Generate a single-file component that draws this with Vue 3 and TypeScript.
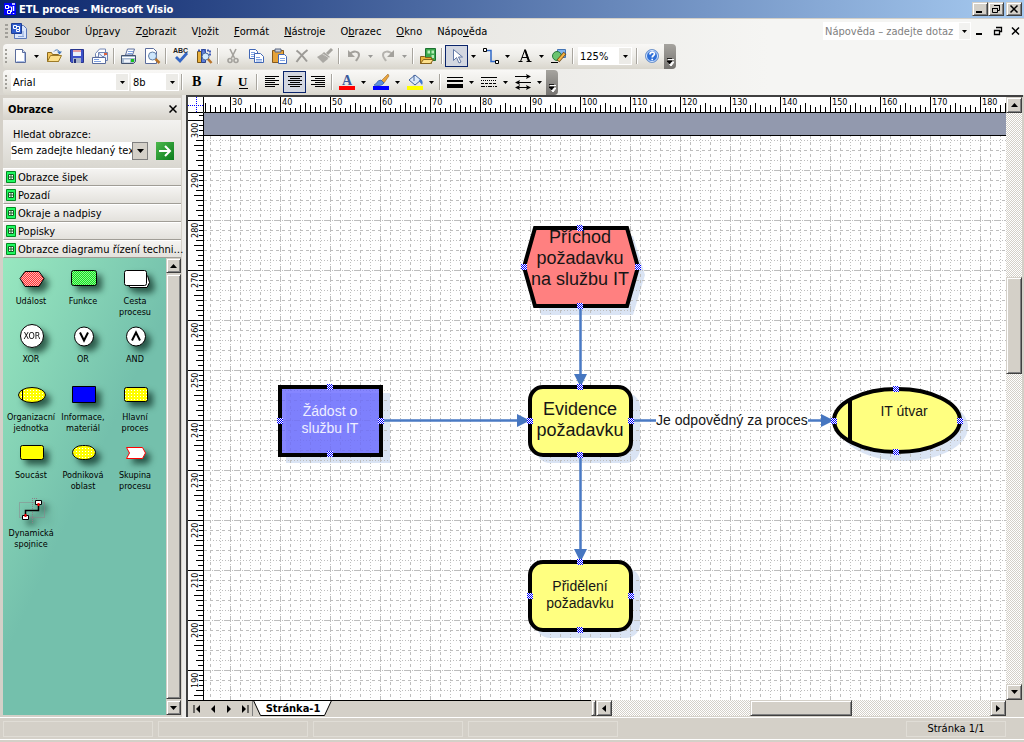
<script setup lang="ts">
import { computed, onBeforeUnmount, onMounted, ref } from 'vue'

interface Item {
  kind: 'icon' | 'arrow' | 'sep' | 'combo'
  name?: string
  label?: string
  active?: boolean
  off?: boolean
  value?: string
  size?: string
}

const icon = (name: string, label: string, extra: Partial<Item> = {}): Item => ({ kind: 'icon', name, label, ...extra })
const arrow = (label: string, off = false): Item => ({ kind: 'arrow', label, off })
const sep: Item = { kind: 'sep' }

const menus = [
  ['', 'S', 'oubor'], ['Úp', 'r', 'avy'], ['Z', 'o', 'brazit'], ['V', 'l', 'ožit'], ['', 'F', 'ormát'],
  ['', 'N', 'ástroje'], ['O', 'b', 'razec'], ['', 'O', 'kno'], ['Nápo', 'v', 'ěda'],
]

const standardBar: Item[] = [
  icon('new', 'Nový'), arrow('Nový – možnosti'), icon('open', 'Otevřít'), icon('save', 'Uložit'), icon('mail', 'E-mail'), sep,
  icon('print', 'Tisk'), icon('preview', 'Náhled'), sep,
  icon('spell', 'Pravopis'), icon('research', 'Zdroje informací'), sep,
  icon('cut', 'Vyjmout'), icon('copy', 'Kopírovat'), icon('paste', 'Vložit'), icon('remove', 'Odstranit'), icon('brush', 'Kopírovat formát'), sep,
  icon('undo', 'Zpět'), arrow('Zpět – možnosti', true), icon('redo', 'Znovu'), arrow('Znovu – možnosti', true), sep,
  icon('stencils', 'Obrazce'), sep,
  icon('pointer', 'Ukazatel', { active: true }), arrow('Ukazatel – možnosti'), icon('connector', 'Spojnice'), arrow('Spojnice – možnosti'),
  icon('text', 'Text'), arrow('Text – možnosti'), icon('drawing', 'Kreslení'), sep,
  { kind: 'combo', label: 'Lupa', value: '125%', size: 'zoom' }, sep,
  icon('help', 'Nápověda'),
]

const formatBar: Item[] = [
  { kind: 'combo', label: 'Písmo', value: 'Arial', size: 'font' },
  { kind: 'combo', label: 'Velikost písma', value: '8b', size: 'points' }, sep,
  icon('bold', 'Tučné'), icon('italic', 'Kurzíva'), icon('underline', 'Podtržené'), sep,
  icon('left', 'Vlevo'), icon('center', 'Na střed', { active: true }), icon('right', 'Vpravo'), sep,
  icon('fontcolor', 'Barva textu'), arrow('Barva textu – možnosti'), icon('linecolor', 'Barva čáry'), arrow('Barva čáry – možnosti'),
  icon('fill', 'Barva výplně'), arrow('Barva výplně – možnosti'), sep,
  icon('weight', 'Tloušťka čáry'), arrow('Tloušťka čáry – možnosti'), icon('dash', 'Vzorek čáry'), arrow('Vzorek čáry – možnosti'),
  icon('ends', 'Zakončení čáry'), arrow('Zakončení čáry – možnosti'),
]

const bars = [
  { id: 'standard', label: 'Standardní', items: standardBar },
  { id: 'format', label: 'Formát', items: formatBar },
]

const icons: Record<string, string> = {
  new: '<path d="M3.500 1.500h7l3 3v10h-10z" fill="#fff" stroke="#5a6c9c"/><path d="M12.500 5v8.500h-8" fill="none" stroke="#a9bce6"/><path d="M10.500 1.500v3h3" fill="#d6e1f8" stroke="#5a6c9c"/>',
  open: '<path d="M1.500 13.500v-9h4l1 2h6v7z" fill="#f3c55a" stroke="#8c6a1c"/><path d="M1.500 13.500l3-6h11l-3 6z" fill="#fde08a" stroke="#9c7a28"/><path d="M8 3.500c2-2.500 5-2 5.500 1" fill="none" stroke="#3f74b8"/><path d="M11 3.500h5l-2.500 3z" fill="#3f74b8"/>',
  save: '<path d="M1.500 1.500h13v13h-12l-1-1z" fill="#3c50c8" stroke="#28358c"/><path d="M4 2h8v6h-8z" fill="#e9effc"/><path d="M4 3h8" stroke="#e04848"/><path d="M4 10h8v5h-8z" fill="#aab4c8"/><path d="M5 11h2v4h-2z" fill="#252f78"/>',
  mail: '<path d="M3.500 5.500l4-4.500h6v8h-10z" fill="#fff" stroke="#7386b4"/><path d="M6.500 4.500h9v8h-9z" fill="#eef3ff" stroke="#7386b4"/><path d="M6.500 5l4.500 4 4.500-4" fill="none" stroke="#7386b4"/><path d="M12 5h3v2h-3z" fill="#e0643c"/><path d="M.500 9.500h13v6h-13z" fill="#fff" stroke="#5a6c9c"/><path d="M2 11.500h5M2 13.500h7" stroke="#7da0e0"/>',
  print: '<path d="M4.500 7l2-6h7l-2 6z" fill="#fff" stroke="#5a6c9c"/><path d="M7 3.500h5M6.500 5.500h5" stroke="#7da0e0"/><path d="M.500 7.500h14v6l-2 2h-12z" fill="#a8bad0" stroke="#44536e"/><path d="M1 9.500h13" stroke="#fff"/><path d="M3 11.500h6v3h-6z" fill="#eef3fa"/><path d="M10 11h3v3h-3z" fill="#18c41c"/>',
  preview: '<path d="M1.500 .500h8l3 3v12h-11z" fill="#fff" stroke="#5a6c9c"/><circle cx="8.500" cy="8" r="4" fill="#cde6fb" stroke="#6480a8"/><path d="M11.500 11l4 4" stroke="#b9742a" stroke-width="2.500"/>',
  spell: '<text x="0" y="5" font-family="Liberation Sans, sans-serif" font-size="7" font-weight="700" fill="#222">ABC</text><path d="M3 9l4 4 7-8" fill="none" stroke="#3567c4" stroke-width="2.800"/>',
  research: '<path d="M1.500 3.500h4v11h-4z" fill="#e7b03c" stroke="#7a5410"/><path d="M5.500 1.500h4v13h-4z" fill="#5c80dc" stroke="#2a438c"/><path d="M2 2.500h12v4h-4" fill="none" stroke="#405cb8" stroke-width="2" stroke-dasharray="2 1"/><circle cx="9.500" cy="8.500" r="3.500" fill="#d4eafc" stroke="#4a6a9c"/><path d="M12 11l3.500 4" stroke="#b9742a" stroke-width="2.500"/>',
  cut: '<g fill="none" stroke="#a3a19c" stroke-width="1.600"><path d="M5 1l4.500 9M11 1l-4.500 9"/><circle cx="5" cy="12.500" r="2"/><circle cx="11" cy="12.500" r="2"/></g>',
  copy: '<g fill="#fff" stroke="#4167b5"><path d="M1.500 1.500h6l2 2v7h-8z"/><path d="M6.500 5.500h6l3 3v6h-9z"/></g><path d="M3 4.500h4M3 6.500h3M3 8.500h3M8 9.500h4M8 11.500h6M8 13h6" stroke="#7fa3e4"/>',
  paste: '<path d="M1.500 2.500h11v12h-11z" fill="#e5a33b" stroke="#85591c"/><path d="M4 1h6v3h-6z" fill="#c9d2e0" stroke="#56627c"/><path d="M7.500 6.500h6l2 2v7h-8z" fill="#fff" stroke="#4167b5"/><path d="M9 10.500h5M9 12.500h5" stroke="#7fa3e4"/>',
  remove: '<path d="M2.500 2.500c3 2 7 6.500 10.500 11M13.500 2c-4 3-7.500 7-11 12" fill="none" stroke="#9c9a96" stroke-width="2"/>',
  brush: '<path d="M15 1l-5 5" stroke="#a5a39e" stroke-width="3"/><path d="M7 4l6 5-3 2-5-5z" fill="#a5a39e"/><path d="M0 9l5-3 6 5-5 4z" fill="#aaa8a3"/><path d="M6 6l6 4" stroke="#d8d6d2"/>',
  undo: '<path d="M3 7c4-5 10-4 10 0 0 3-2 4-3 6" fill="none" stroke="#a3a19c" stroke-width="2"/><path d="M2 2v7h7z" fill="#a3a19c"/>',
  redo: '<path d="M13 7c-4-5-10-4-10 0 0 3 2 4 3 6" fill="none" stroke="#b5b3ae" stroke-width="2"/><path d="M14 2v7h-7z" fill="#a3a19c"/>',
  stencils: '<path d="M5.500 .500h10v12h-10z" fill="#3ca84c" stroke="#1c7030"/><path d="M7.500 2.500h2.500v3h-2.500zM11.500 2.500h2.500v3h-2.500zM11.500 7h2.500v3h-2.500z" fill="#b8ecb8"/><path d="M.500 15.500v-7h4l1 1h6v6z" fill="#e9b33c" stroke="#86611a"/><path d="M.500 15.500l3-4h10l-3 4z" fill="#fde08a" stroke="#86611a"/>',
  pointer: '<path d="M4.500 1.500v11l3-3 2.500 5.500 2-1-2.500-5h4z" fill="#fff" stroke="#6379a6"/>',
  connector: '<path d="M3 2.500h5v11h5" fill="none" stroke="#2f68c8" stroke-width="1.500"/><path d="M.500 .500h3v3h-3zM12.500 12.500h3v3h-3z" fill="#fff" stroke="#000"/>',
  text: '<path d="M1.500 13.500h4M9.500 13.500h5M3.500 13.500l4.500-12M8 1.500l4.500 12M5 9.500h6" fill="none" stroke="#000"/><path d="M8 2l4 11.500" stroke="#000" stroke-width="2"/>',
  drawing: '<path d="M6.500 1.500h8v8h-8z" fill="#7eb4ee" stroke="#4474b4"/><circle cx="6" cy="8" r="4.500" fill="#6bc46f" stroke="#26783c"/><path d="M0 14.500h7" stroke="#000"/><path d="M7 13l7-8" stroke="#744c18" stroke-width="3.500"/><path d="M7.500 12.500l6-7" stroke="#f5b547" stroke-width="2"/>',
  help: '<circle cx="8" cy="8" r="6.500" fill="#2f70d8" stroke="#7699cc"/><circle cx="8" cy="8" r="5.500" fill="none" stroke="#dcebff"/><path d="M6 6.500c0-3 4.500-3 4.500-.500 0 1.500-2.300 1.500-2.300 3.500M8.200 10.800v1.500" fill="none" stroke="#fff" stroke-width="1.700"/>',
  bold: '<text x="3" y="12" font-family="Liberation Serif, serif" font-size="14" font-weight="700">B</text>',
  italic: '<text x="5" y="12" font-family="Liberation Serif, serif" font-size="14" font-weight="700" font-style="italic">I</text>',
  underline: '<text x="3" y="12" font-family="Liberation Serif, serif" font-size="13" font-weight="700">U</text><path d="M4 14.500h9" stroke="#000"/>',
  left: '<path d="M1 2.500h14M1 4.500h10M1 6.500h14M1 8.500h10M1 10.500h14M1 12.500h10" stroke="#000"/>',
  center: '<path d="M1 2.500h14M3 4.500h10M1 6.500h14M3 8.500h10M1 10.500h14M3 12.500h10" stroke="#000"/>',
  right: '<path d="M1 2.500h14M5 4.500h10M1 6.500h14M5 8.500h10M1 10.500h14M5 12.500h10" stroke="#000"/>',
  fontcolor: '<text x="3" y="11" font-family="Liberation Serif, serif" font-size="14" font-weight="700" fill="#3a5a9c">A</text><path d="M0 12h16v4h-16z" fill="#f00"/>',
  linecolor: '<path d="M8 7l7-7 1 2-5 7z" fill="#e9a43c" stroke="#8c5a1c" stroke-width=".500"/><path d="M1 11c2 0 3-5 7-5l3 3c-2 3-7 3-10 2z" fill="#5c8ee0" stroke="#2c55a4" stroke-width=".700"/><path d="M0 12h16v4h-16z" fill="#00f"/>',
  fill: '<path d="M2 6l6-5 6 5-6 5z" fill="#dceafa" stroke="#44639c"/><path d="M7 1v6" stroke="#44639c"/><path d="M13 5c3 1 3 4 2 6l-3-4z" fill="#3f78d0"/><path d="M0 12h16v4h-16z" fill="#ff0"/>',
  weight: '<path d="M0 3.500h16" stroke="#000"/><path d="M0 7h16" stroke="#000" stroke-width="2"/><path d="M0 12h16" stroke="#000" stroke-width="4"/>',
  dash: '<path d="M0 3.500h16" stroke="#000"/><path d="M0 6.500h16" stroke="#000" stroke-dasharray="1 1"/><path d="M0 9.500h16" stroke="#000" stroke-dasharray="3 1"/><path d="M0 12.500h16" stroke="#000" stroke-dasharray="4 1 1 1"/>',
  ends: '<path d="M0 2.500h13M3 8.500h13M2 13.500h12" stroke="#000"/><path d="M11 0l5 2.500-5 2.500 1-2.500zM5 6l-5 2.500 5 2.500-1-2.500zM5 11l-5 2.500 5 2.500-1-2.500zM11 11l5 2.500-5 2.500 1-2.500z"/>',
}

const stencilGroups = ['Obrazce šipek', 'Pozadí', 'Okraje a nadpisy', 'Popisky', 'Obrazce diagramu řízení techni…']

const masters: { label: string[]; art: string }[] = [
  { label: ['Událost'], art: '<path d="M5 13.500l5-7h14l5 7-5 8h-14z" fill="url(#dotRed)" stroke="#000"/>' },
  { label: ['Funkce'], art: '<rect x="4.500" y="5.500" width="25" height="15" rx="2" fill="url(#dotGreen)" stroke="#000"/>' },
  { label: ['Cesta', 'procesu'], art: '<path d="M8 18l3 4.500h17l2.500-5-2-7" fill="#fff" stroke="#000"/><rect x="5.500" y="5.500" width="22" height="15" rx="2" fill="#fff" stroke="#000"/>' },
  { label: ['XOR'], art: '<circle cx="17" cy="13" r="11.500" fill="#fff" stroke="#000"/><text x="17" y="16" text-anchor="middle" font-family="DejaVu Sans, sans-serif" font-size="8">XOR</text>' },
  { label: ['OR'], art: '<circle cx="17" cy="13.500" r="9.500" fill="#fff" stroke="#000"/><path d="M13 9.500l4 8 4-8" fill="none" stroke="#000" stroke-width="2"/>' },
  { label: ['AND'], art: '<circle cx="17" cy="13.500" r="9.500" fill="#fff" stroke="#000"/><path d="M13 17.500l4-8 4 8" fill="none" stroke="#000" stroke-width="2"/>' },
  { label: ['Organizacní', 'jednotka'], art: '<ellipse cx="17" cy="14" rx="13.500" ry="7.500" fill="url(#dotYellow)" stroke="#000"/><path d="M7.500 9v10" stroke="#000"/>' },
  { label: ['Informace,', 'materiál'], art: '<path d="M5.500 5.500h23v16h-23z" fill="#00f" stroke="#000"/>' },
  { label: ['Hlavní', 'proces'], art: '<rect x="5.500" y="6.500" width="23" height="14" rx="2" fill="url(#dotYellow)" stroke="#000"/>' },
  { label: ['Soucást'], art: '<rect x="5.500" y="6.500" width="23" height="14" rx="2" fill="#ff0" stroke="#000"/>' },
  { label: ['Podniková', 'oblast'], art: '<rect x="5.500" y="6.500" width="23" height="14" rx="10" ry="7" fill="url(#dotYellow)" stroke="#000"/>' },
  { label: ['Skupina', 'procesu'], art: '<path d="M7.500 8.500h16l3 5.500-3 5.500h-16l3-5.500z" fill="#fff" stroke="#f00"/>' },
  { label: ['Dynamická', 'spojnice'], art: '<path d="M4.500 5.500h25v15h-25zM17.500 1v25M17 1.500h6" fill="none" stroke="#8c8088" stroke-dasharray="1 1"/><path d="M10.500 18v-4.500h13v-5" fill="none" stroke="#000" stroke-width="1.500"/><path d="M20.500 3.500h6v4h-6zM7.500 18.500h6v4h-6z" fill="#fff" stroke="#000"/><path d="M23.500 6v3M10.500 17v3" stroke="#f00" stroke-width="2"/>' },
]

// Both rulers use 5 px per millimetre, with a labelled tick every 50 px.
const viewWidth = ref(window.innerWidth)
const viewHeight = ref(window.innerHeight)
const measure = () => {
  viewWidth.value = window.innerWidth
  viewHeight.value = window.innerHeight
}
onMounted(() => window.addEventListener('resize', measure))
onBeforeUnmount(() => window.removeEventListener('resize', measure))

const steps = (n: number) => Array.from({ length: Math.max(n, 1) }, (_, k) => k)
const stepsX = computed(() => steps(Math.floor((viewWidth.value - 218) / 50) + 1))
const stepsY = computed(() => steps(Math.floor((viewHeight.value - 182) / 50) + 1))
const tickLength = (i: number) => (i === 5 ? 10 : i < 4 ? 5 : i % 2 ? 6 : 8)
const minor = [1, 2, 3, 4, 5, 6, 7, 8, 9]

interface Line { at: number; style: string }
const gridLines = (first: number, offset: number, count: number): Line[] =>
  Array.from({ length: count }, (_, k) => {
    const step = (((k - offset) % 5) + 5) % 5
    return { at: first + k * 10, style: step === 0 ? 'major' : step % 2 ? 'dashed' : 'dotted' }
  })
const columns = gridLines(210, 2, 240)
const rows = gridLines(140, 3, 180)

const marks = [
  [580, 228], [524, 267], [638, 267], [580, 306],
  [580, 387], [530, 421], [631, 421], [580, 455],
  [330, 387], [280, 421], [381, 421], [330, 454],
  [580, 562], [530, 596], [631, 596], [580, 630],
  [896, 389], [834, 421], [960, 421], [896, 452],
]
</script>

<template>
  <div class="app">
    <header class="title">
      <svg class="logo" width="12" height="12" viewBox="0 0 12 12"><path d="M0 0h12v12H0z" fill="#00f" /><path d="M1.500 2.500h3v3h-3zM4.500 4h3v5M3.500 7.500h3v3h-3z" fill="none" stroke="#fff" /><path d="M8 1h3M9.500 3v5M9.500 10v1" stroke="#fff" stroke-width="1.500" /></svg>
      <h1>ETL proces - Microsoft Visio</h1>
      <button class="raised win" aria-label="Minimalizovat"><svg width="10" height="10"><path d="M1 8h6" stroke="#000" stroke-width="2" /></svg></button>
      <button class="raised win" aria-label="Obnovit"><svg width="10" height="10"><path d="M3.500 1.500h5v5h-2M3 1.500h6M1.500 4.500h5v4h-5zM1 4.500h6" fill="none" stroke="#000" /></svg></button>
      <button class="raised win last" aria-label="Zavřít"><svg width="10" height="10"><path d="M1.500 1.500l7 7M8.500 1.500l-7 7" stroke="#000" stroke-width="1.500" /></svg></button>
    </header>

    <div class="tools">
      <nav class="menu">
        <span class="grip"></span>
        <svg class="doc" width="16" height="16" viewBox="0 0 16 16"><path d="M3.500 2.500h9l3 3v10h-12z" fill="#dce6fa" stroke="#5a77b8" /><path d="M.500 .500h10v10h-10z" fill="#2f5ccc" stroke="#1f3e94" /><path d="M2.500 2.500h3v3h-3zM5.500 6.500h3v2h-3zM6 3.500h2.500v3" fill="none" stroke="#fff" /><path d="M12 8v6M7 13.500h6" stroke="#8aa6dc" /></svg>
        <button v-for="m in menus" :key="m.join('')" class="menu-item">{{ m[0] }}<u>{{ m[1] }}</u>{{ m[2] }}</button>
        <div class="ask">
          <input type="text" value="Nápověda – zadejte dotaz" aria-label="Nápověda" />
          <button aria-label="Předchozí dotazy"><svg width="5" height="3"><path d="M0 0h5l-2.500 3z" /></svg></button>
        </div>
        <div class="doc-buttons">
          <button aria-label="Minimalizovat dokument"><svg width="10" height="10"><path d="M1 8h6" stroke="#000" stroke-width="2" /></svg></button>
          <button aria-label="Obnovit dokument"><svg width="10" height="10"><path d="M3.500 1.500h5v4h-2M3 1.500h6M1.500 4.500h5v4h-5zM1 4.500h6" fill="none" stroke="#000" stroke-width="1.300" /></svg></button>
          <button aria-label="Zavřít dokument"><svg width="10" height="10"><path d="M1 1.500l7 7M8 1.500l-7 7" stroke="#000" stroke-width="1.500" /></svg></button>
        </div>
      </nav>

      <div v-for="bar in bars" :key="bar.id" class="bar" :class="bar.id" role="toolbar" :aria-label="bar.label">
        <span class="grip"></span>
        <template v-for="(item, i) in bar.items" :key="i">
          <button v-if="item.kind === 'icon'" class="tool" :class="{ active: item.active }" :aria-label="item.label">
            <svg width="16" height="16" viewBox="0 0 16 16" v-html="icons[item.name ?? '']"></svg>
          </button>
          <button v-else-if="item.kind === 'arrow'" class="arrow" :class="{ off: item.off }" :aria-label="item.label">
            <svg width="5" height="3"><path d="M0 0h5l-2.500 3z" /></svg>
          </button>
          <div v-else-if="item.kind === 'combo'" class="combo" :class="item.size">
            <select :aria-label="item.label"><option>{{ item.value }}</option></select>
            <span class="combo-arrow"><svg width="5" height="3"><path d="M0 0h5l-2.500 3z" /></svg></span>
          </div>
          <span v-else class="sep"></span>
        </template>
        <button class="more" aria-label="Možnosti panelu"><svg width="7" height="8"><path d="M1 1.500h6M1 4h6l-3 4z" fill="#fff" stroke="#fff" /><path d="M0 .500h5M0 3h5l-2.500 3z" fill="#000" stroke="#000" stroke-width=".800" /></svg></button>
      </div>
    </div>

    <main>
      <aside>
        <div class="panel-title">
          <h2>Obrazce</h2>
          <button aria-label="Zavřít obrazce"><svg width="8" height="8"><path d="M.500 .500l7 7M7.500 .500l-7 7" stroke="#000" stroke-width="1.500" /></svg></button>
        </div>
        <form class="search" @submit.prevent>
          <label for="shape-search">Hledat obrazce:</label>
          <div class="search-row">
            <input id="shape-search" type="text" value="Sem zadejte hledaný tex" />
            <button type="button" class="drop" aria-label="Předchozí hledání"><svg width="7" height="4"><path d="M0 0h7l-3.500 4z" /></svg></button>
            <button class="go" aria-label="Hledat"><svg width="18" height="18"><path d="M3 9h11M9 4l5 5-5 5" fill="none" stroke="#fff" stroke-width="2" /></svg></button>
          </div>
        </form>
        <button v-for="g in stencilGroups" :key="g" class="group">
          <svg width="10" height="12" viewBox="0 0 10 12"><path d="M.500 .500h9v11h-9z" fill="#20f860" stroke="#008c20" /><path d="M2.500 3.500h5v5h-5zM5 3.500v5M2.500 6h5" fill="#fff" stroke="#106020" /></svg>
          <span>{{ g }}</span>
        </button>
        <div class="stencil">
          <ul>
            <li v-for="m in masters" :key="m.label.join(' ')">
              <svg width="34" height="28" viewBox="0 0 34 28" v-html="m.art"></svg>
              <span v-for="line in m.label" :key="line">{{ line }}</span>
            </li>
          </ul>
          <div class="vscroll narrow">
            <button class="raised" aria-label="Nahoru"><svg width="7" height="4"><path d="M0 4h7l-3.500-4z" /></svg></button>
            <div class="raised thumb"></div>
            <button class="raised" aria-label="Dolů"><svg width="7" height="4"><path d="M0 0h7l-3.500 4z" /></svg></button>
          </div>
        </div>
      </aside>

      <section class="drawing">
        <svg class="corner" width="16" height="16"><path d="M0 8.500h16M8.500 0v16" stroke="#00f" stroke-dasharray="1 1" /><path d="M15.500 0v15.500h-16" fill="none" stroke="#000" /></svg>

        <svg class="ruler-x" width="100%" height="16">
          <path d="M0 15.500h3000" stroke="#000" />
          <g v-for="k in stepsX" :key="k" :transform="`translate(${k * 50 - 24} 0)`">
            <path d="M.500 0v16" stroke="#000" />
            <path v-for="i in minor" :key="i" :d="`M${i * 5 + 0.5} 16v-${tickLength(i)}`" stroke="#000" />
            <text v-if="k > 0" x="2" y="8">{{ 20 + k * 10 }}</text>
          </g>
        </svg>

        <svg class="ruler-y" width="16" height="100%">
          <path d="M15.500 0v3000" stroke="#000" />
          <path d="M16 2.500h-5" stroke="#000" />
          <g v-for="k in stepsY" :key="k" :transform="`translate(0 ${k * 50 + 7})`">
            <path d="M0 .500h16" stroke="#000" />
            <path v-for="i in minor" :key="i" :d="`M16 ${i * 5 + 0.5}h-${tickLength(i)}`" stroke="#000" />
            <text transform="translate(10 18) rotate(-90)">{{ 300 - k * 10 }}</text>
          </g>
        </svg>

        <svg class="page" width="100%" height="100%">
          <defs>
            <pattern id="dotRed" width="2" height="2" patternUnits="userSpaceOnUse"><path d="M0 0h2v2h-2z" fill="#f33" /><path d="M0 0h1v1h-1zM1 1h1v1h-1z" fill="#ffb8b8" /></pattern>
            <pattern id="dotGreen" width="2" height="2" patternUnits="userSpaceOnUse"><path d="M0 0h2v2h-2z" fill="#10e820" /><path d="M0 0h1v1h-1zM1 1h1v1h-1z" fill="#90f090" /></pattern>
            <pattern id="dotYellow" width="3" height="3" patternUnits="userSpaceOnUse"><path d="M0 0h3v3h-3z" fill="#ff0" /><path d="M0 0h1v1h-1z" fill="#fff" /></pattern>
            <symbol id="mark" width="6" height="6" viewBox="0 0 6 6"><path d="M0 0h6v6h-6z" fill="#fff" /><path d="M0 0h1v1h-1zM2 0h1v1h-1zM4 0h1v1h-1zM1 1h1v1h-1zM3 1h1v1h-1zM5 1h1v1h-1zM0 2h1v1h-1zM2 2h1v1h-1zM4 2h1v1h-1zM1 3h1v1h-1zM3 3h1v1h-1zM5 3h1v1h-1zM0 4h1v1h-1zM2 4h1v1h-1zM4 4h1v1h-1zM1 5h1v1h-1zM3 5h1v1h-1zM5 5h1v1h-1z" fill="#00f" /></symbol>
          </defs>
          <rect width="100%" height="100%" fill="#fff" />
          <g transform="translate(-204 -113)">
            <g fill="#dae4f4">
              <path d="M541 236h92l12 39-12 40h-92l-11-40z" />
              <rect x="536" y="393" width="104" height="70" rx="14" />
              <rect x="536" y="568" width="104" height="70" rx="14" />
              <rect x="286" y="393" width="104" height="70" />
              <ellipse cx="904" cy="427" rx="64" ry="34" />
            </g>
            <g class="grid">
              <path v-for="c in columns" :key="c.at" :class="c.style" :d="`M${c.at + 0.5} 136v2000`" />
              <path v-for="r in rows" :key="r.at" :class="r.style" :d="`M204 ${r.at + 0.5}h2600`" />
            </g>
            <rect x="204" y="113" width="3000" height="22" fill="#9299ae" />
            <path d="M204 135.500h3000" stroke="#000" />

            <g stroke="#4a7ac4" stroke-width="2.500">
              <path d="M580.500 306v70M580.500 455v96M382 420.500h138M632 420.500h24M808 420.500h16" />
            </g>
            <path d="M574 374h13l-6.500 13zM574 549h13l-6.500 13zM517 414v13l13-6.500zM821 414v13l13-6.500z" fill="#4676c0" />

            <g stroke="#000" stroke-width="4">
              <path d="M535 228h92l11 39-11 39h-92l-11-39z" fill="#ff8080" />
              <rect x="530" y="387" width="101" height="68" rx="13" fill="#ffff80" />
              <rect x="530" y="562" width="101" height="68" rx="13" fill="#ffff80" />
              <rect x="280" y="387" width="101" height="68" fill="#6464ff" fill-opacity=".78" />
              <ellipse cx="897" cy="420.500" rx="63" ry="31.500" fill="#ffff80" />
              <path d="M850 399v43" />
            </g>
            <rect x="656" y="412" width="152" height="17" fill="#fff" />
            <g class="big">
              <text x="580" y="243">Příchod</text><text x="580" y="264">požadavku</text><text x="580" y="285">na službu IT</text>
              <text x="580" y="415">Evidence</text><text x="580" y="436">požadavku</text>
            </g>
            <g class="small">
              <text x="580" y="591">Přidělení</text><text x="580" y="608">požadavku</text>
              <text x="732" y="425">Je odpovědný za proces</text>
              <text x="904" y="416">IT útvar</text>
              <g class="light"><text x="330" y="416">Žádost o</text><text x="330" y="433">službu IT</text></g>
            </g>
            <use v-for="(p, i) in marks" :key="i" href="#mark" :x="p[0] - 3" :y="p[1] - 3" />
          </g>
        </svg>

        <div class="vscroll">
          <button class="raised" aria-label="Posunout nahoru"><svg width="7" height="4"><path d="M0 4h7l-3.500-4z" /></svg></button>
          <div class="track before"></div>
          <div class="raised thumb"></div>
          <div class="track after"></div>
          <button class="raised" aria-label="Posunout dolů"><svg width="7" height="4"><path d="M0 0h7l-3.500 4z" /></svg></button>
        </div>

        <div class="bottom">
          <div class="pages">
            <button class="step" aria-label="První stránka"><svg width="8" height="8"><path d="M7 0v8l-4-4z" /><path d="M1 0v8" stroke="#000" /></svg></button>
            <button class="step" aria-label="Předchozí stránka"><svg width="8" height="8"><path d="M6 0v8l-4-4z" /></svg></button>
            <button class="step" aria-label="Další stránka"><svg width="8" height="8"><path d="M2 0v8l4-4z" /></svg></button>
            <button class="step end" aria-label="Poslední stránka"><svg width="8" height="8"><path d="M1 0v8l4-4z" /><path d="M7 0v8" stroke="#000" /></svg></button>
            <button class="tab">
              <svg width="80" height="15"><path d="M.500 -.500l7 15h64l7-15z" fill="#fff" stroke="#000" /></svg>
              <span>Stránka-1</span>
            </button>
          </div>
          <div class="raised split"></div>
          <button class="raised" aria-label="Posunout vlevo"><svg width="4" height="7"><path d="M4 0v7l-4-3.500z" /></svg></button>
          <div class="track hold"><div class="raised hthumb"></div></div>
          <button class="raised" aria-label="Posunout vpravo"><svg width="4" height="7"><path d="M0 0v7l4-3.500z" /></svg></button>
        </div>
      </section>
    </main>

    <footer>
      <span class="cell"></span><span class="cell"></span><span class="cell"></span><span class="cell"></span>
      <span class="cell count">Stránka 1/1</span>
    </footer>
  </div>
</template>

<style>
body { margin: 0; overflow: hidden; }
</style>

<style scoped>
.app {
  display: flex; flex-direction: column; height: 100vh;
  background: #d4d0c8; color: #000;
  font: 11px/13px "DejaVu Sans Condensed", "Noto Sans", sans-serif;
}
* { box-sizing: border-box; }
svg { display: block; flex: none; }
button, input, select { font: inherit; color: inherit; margin: 0; padding: 0; border: 0; background: none; border-radius: 0; }
button { display: flex; align-items: center; justify-content: center; flex: none; }
input { outline: 0; min-width: 0; }
h1, h2 { margin: 0; font-size: 11px; font-weight: 700; }

.raised {
  background: #d4d0c8; border: 1px solid; border-color: #d4d0c8 #404040 #404040 #d4d0c8;
  box-shadow: inset 1px 1px #fff, inset -1px -1px #808080;
}

.title {
  display: flex; align-items: center; flex: none; height: 18px; padding: 0 2px 0 4px;
  background: linear-gradient(90deg, #0a246a, #a6caf0); color: #fff;
}
.title h1 { flex: 1; padding-left: 3px; }
.win { width: 16px; height: 14px; }
.last { margin-left: 2px; }

.tools { flex: none; border-top: 1px solid #d4d0c8; background: linear-gradient(90deg, #d8d5ce, #f5f5f3 75%); }
.menu { display: flex; align-items: center; height: 24px; margin-bottom: 1px; padding: 0 3px 0 5px; }
.grip { flex: none; width: 3px; height: 15px; background: repeating-linear-gradient(#a19f99 0 2px, transparent 2px 4px); }
.doc { margin: 0 8px 0 3px; }
.menu-item { margin-right: 15px; white-space: pre; }
.menu-item u { text-underline-offset: 1px; }
.ask { display: flex; margin-left: auto; width: 148px; height: 18px; background: #fff; border: 1px solid #fff; }
.ask input { flex: 1; color: #808080; padding-left: 1px; }
.ask button { width: 11px; background: #f2f2f0; }
.doc-buttons { display: flex; gap: 8px; padding-left: 4px; }
.doc-buttons button { width: 10px; height: 16px; }

.bar {
  display: flex; align-items: center; width: max-content; height: 25px; margin-left: 3px; padding-bottom: 1px;
  border-radius: 4px; background: linear-gradient(#f9f8f6, #efeeea 45%, #d9d6cd);
}
.format { margin-top: 1px; }
.bar .grip { width: 2px; margin: 0 1px 0 2px; }
.format .grip { margin-right: 4px; }
.tool { width: 23px; height: 22px; }
.tool svg { overflow: visible; }
.active { background: #d3d7e1; border: 1px solid #0a246a; }
.arrow { width: 11px; height: 22px; }
.off { opacity: .35; }
.sep { width: 2px; height: 16px; margin: 0 2px; border-left: 1px solid #a8a59e; border-right: 1px solid #fff; }
.combo { display: grid; grid-template-columns: 1fr 12px; height: 18px; background: #fff; border: 1px solid #fff; }
.combo select { grid-area: 1 / 1 / 2 / 3; appearance: none; padding-left: 1px; outline: 0; }
.combo-arrow { grid-area: 1 / 2; display: grid; place-items: center; background: #ecebe7; pointer-events: none; }
.font { width: 118px; margin-right: 2px; }
.points { width: 48px; }
.zoom { width: 54px; margin: 0 2px; }
.more { align-items: flex-end; width: 12px; height: 25px; margin: 0 0 -1px 1px; padding-bottom: 3px; border-radius: 0 4px 4px 0; background: linear-gradient(#a6a49f, #757370); }

main { flex: 1; min-height: 0; display: flex; padding-right: 1px; border-bottom: 1px solid #fff; }
aside { flex: none; display: flex; flex-direction: column; width: 186px; padding: 3px 5px 2px 3px; background: linear-gradient(90deg, #d4d0c8 182px, #ecebe8 182px); }
.panel-title { display: flex; align-items: center; justify-content: space-between; height: 22px; padding: 0 4px 0 5px; background: linear-gradient(#f3f2ef, #d6d3cb); }
.search { height: 48px; padding: 8px 7px 0 8px; background: linear-gradient(#f3f2f0, #d9d7d0); }
.search label { display: block; height: 14px; padding-left: 2px; }
.search-row { display: flex; }
.search-row input { width: 121px; height: 18px; padding-bottom: 2px; background: #fff; }
.drop { width: 16px; height: 18px; background: #d4d0c8; border: 1px solid #808080; }
.go { width: 18px; height: 18px; margin-left: 8px; background: linear-gradient(135deg, #4cb84c, #0a7c1c); }
.group {
  justify-content: flex-start; gap: 2px; height: 18px; padding-left: 2px; white-space: nowrap;
  border: 1px solid; border-color: #fff #a09d96 #a09d96 #fff; border-right-width: 0; background: linear-gradient(#f5f4f2, #e3e1dc);
}
.stencil { flex: 1; min-height: 0; display: flex; background: linear-gradient(115deg, #98e8c0, #74c0ac 48%); }
ul { flex: 1; display: grid; grid-template-columns: repeat(3, 52px); grid-auto-rows: 58px; margin: 0; padding: 7px 0 0 2px; list-style: none; }
li { display: flex; flex-direction: column; align-items: center; font-size: 9px; line-height: 11px; white-space: nowrap; }
li svg { margin: 0 0 3px 2px; overflow: visible; filter: drop-shadow(5px 5px 3px rgba(0, 30, 20, .65)); }

.vscroll { display: flex; flex-direction: column; width: 16px; background: #d4d0c8; }
.vscroll button, .bottom > button { width: 16px; height: 16px; }
.track { background: repeating-conic-gradient(#fff 0 25%, #d4d0c8 0 50%) 0 0 / 2px 2px; }
.before { flex: 165; }
.vscroll .thumb { flex: 95; }
.after { flex: 311; }
.narrow { gap: 1px; width: 15px; }
.narrow button { width: 15px; height: 15px; }
.narrow .thumb { flex: 1; }

.drawing {
  flex: 1; min-width: 0; display: grid; grid-template-columns: 16px 1fr 16px; grid-template-rows: 16px minmax(0, 1fr) 16px;
  padding: 1px; border: 1px solid #404040; border-width: 1px 0 0 1px; background: #d4d0c8; box-shadow: inset 1px 1px #404040;
}
.corner { background: #fff; }
.ruler-x, .ruler-y { background: #fff; overflow: hidden; font-size: 9px; }
.ruler-y { grid-area: 2 / 1; }
.page { grid-area: 2 / 2; overflow: hidden; font-family: "Liberation Sans", Arial, sans-serif; }
.drawing > .vscroll { grid-area: 1 / 3 / 3 / 4; }
.grid path { stroke: #bdbdbd; }
.grid .major { stroke-dasharray: 6 2 1 1; }
.grid .dashed { stroke-dasharray: 3 3; }
.grid .dotted { stroke-dasharray: 1 2; }
.big, .small { text-anchor: middle; fill: #161616; }
.big { font-size: 18px; }
.small { font-size: 14px; }
.light { fill: #eeeeff; }

.bottom { grid-area: 3 / 1 / 4 / 3; display: flex; }
.pages { flex: none; display: flex; width: 403px; padding-left: 1px; border-top: 1px solid #000; }
.step { width: 16px; height: 15px; }
.end { border-right: 1px solid #808080; }
.tab { display: grid; font-weight: 700; }
.tab svg, .tab span { grid-area: 1 / 1; }
.split { width: 5px; }
.hold { flex: 1; display: flex; justify-content: center; }
.hthumb { width: 102px; }

footer { flex: none; display: flex; align-items: flex-start; gap: 5px; height: 24px; padding: 3px 18px 0 3px; background: linear-gradient(transparent 21px, #fff 21px 22px, transparent 22px); }
.cell { width: 150px; height: 16px; border: 1px solid #e0ddd6; text-align: center; line-height: 14px; }
.count { width: 100px; margin-left: auto; }
</style>
